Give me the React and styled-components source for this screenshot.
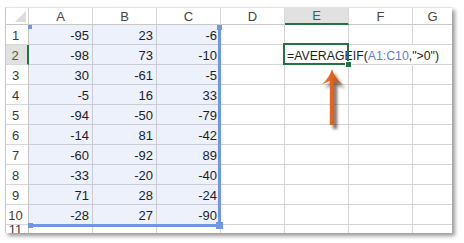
import styled, { createGlobalStyle } from "styled-components";

const GlobalStyle = createGlobalStyle`
  html, body { margin: 0; padding: 0; background: #fff; }
  body { font-family: "Liberation Sans", Arial, sans-serif; }
`;

const data = [
  [-95, 23, -6],
  [-98, 73, -10],
  [30, -61, -5],
  [-5, 16, 33],
  [-94, -50, -79],
  [-14, 81, -42],
  [-60, -92, 89],
  [-33, -20, -40],
  [71, 28, -24],
  [-28, 27, -90],
];

const cols = ["A", "B", "C", "D", "E", "F", "G"];

const Page = styled.div`
  width: 464px;
  height: 243px;
  padding: 7px 0 0 5px;
  box-sizing: border-box;
`;

const Frame = styled.div`
  position: relative;
  width: 447px;
  height: 226px;
  border-left: 1px solid #c9c9c9;
  border-top: 1px solid #e4e4e4;
  box-sizing: border-box;
  overflow: hidden;
  box-shadow: 3px 3px 4px rgba(0, 0, 0, 0.4);
  background: #fff;
`;

const Grid = styled.div`
  display: grid;
  grid-template-columns: 23px repeat(6, 64px) 40px;
  grid-template-rows: 17px repeat(10, 20px) 10px;
`;

const Corner = styled.div`
  position: relative;
  background: #fff;
  border-right: 1px solid #d4d4d4;
  border-bottom: 1px solid #c6c6c6;
  &::after {
    content: "";
    position: absolute;
    right: 2px;
    bottom: 2px;
    border-left: 11px solid transparent;
    border-bottom: 11px solid #dcdcdc;
  }
`;

const ColHead = styled.div`
  display: flex;
  align-items: center;
  justify-content: center;
  font-size: 13px;
  color: ${(p) => (p.$active ? "#217346" : "#444")};
  background: ${(p) => (p.$active ? "#e1e1e1" : "#fff")};
  border-right: 1px solid #d8d8d8;
  border-bottom: ${(p) => (p.$active ? "2px solid #217346" : "1px solid #c6c6c6")};
  box-sizing: border-box;
`;

const RowHead = styled.div`
  display: flex;
  align-items: ${(p) => (p.$clip ? "flex-start" : "center")};
  justify-content: center;
  padding: ${(p) => (p.$clip ? "0 3px 0 0" : "2px 3px 0 0")};
  font-size: 13px;
  line-height: ${(p) => (p.$clip ? "9px" : "normal")};
  overflow: hidden;
  color: ${(p) => (p.$active ? "#217346" : "#3a3a3a")};
  background: ${(p) => (p.$active ? "#e1e1e1" : "#fff")};
  border-right: ${(p) => (p.$active ? "2px solid #217346" : "1px solid #c6c6c6")};
  border-bottom: 1px solid #d8d8d8;
  box-sizing: border-box;
`;

const Cell = styled.div`
  display: flex;
  align-items: center;
  justify-content: flex-end;
  padding: 2px 3px 0 0;
  font-size: 13px;
  color: #1e1e1e;
  background: ${(p) => (p.$sel ? "#edf1fb" : "#fff")};
  border-right: 1px solid ${(p) => (p.$sel ? "#c9ccd4" : p.$hideRight ? "transparent" : "#d4d4d4")};
  border-bottom: 1px solid ${(p) => (p.$sel ? "#c9ccd4" : "#d4d4d4")};
  box-sizing: border-box;
  white-space: nowrap;
  overflow: visible;
`;

const FormulaCell = styled(Cell)`
  position: relative;
  justify-content: flex-start;
  padding: 2px 0 0 2px;
  font-size: 12.3px;
  z-index: 3;
  &::before {
    content: "";
    position: absolute;
    left: -2px;
    top: -2px;
    right: -1px;
    bottom: -1px;
    border: 2px solid #217346;
    pointer-events: none;
  }
  &::after {
    content: "";
    position: absolute;
    right: -4px;
    bottom: -4px;
    width: 5px;
    height: 5px;
    background: #217346;
    border: 1px solid #fff;
  }
`;

const Ref = styled.span`
  color: ${(p) => p.$color || "inherit"};
`;

const Caret = styled.span`
  display: inline-block;
  width: 1px;
  height: 15px;
  margin-left: 2px;
  background: #000;
`;

const RangeBox = styled.div`
  position: absolute;
  left: 22px;
  top: 17px;
  width: 193px;
  height: 202px;
  border-right: 3px solid #6f97e6;
  border-bottom: 3px solid #6f97e6;
  box-sizing: border-box;
  pointer-events: none;
  z-index: 2;
`;

const Handle = styled.span`
  position: absolute;
  width: ${(p) => p.$size}px;
  height: ${(p) => p.$size}px;
  background: #6f97e6;
  ${(p) => p.$pos}
`;

const ArrowLayer = styled.svg`
  position: absolute;
  left: 312px;
  top: 56px;
  z-index: 4;
`;

const arrowPath =
  "M14 5 C15.5 10 19 16 24.5 20.5 L16.2 17 L16.2 61 L11.8 61 L11.8 17 L3.5 20.5 C9 16 12.5 10 14 5 Z";

export default function App() {
  return (
    <>
      <GlobalStyle />
      <Page>
        <Frame>
          <Grid>
            <Corner />
            {cols.map((c) => (
              <ColHead key={c} $active={c === "E"}>
                {c}
              </ColHead>
            ))}
            {data.map((row, r) => (
              <Row key={r} r={r} row={row} />
            ))}
            <RowHead $clip>11</RowHead>
            {cols.map((c) => (
              <Cell key={c} />
            ))}
          </Grid>
          <RangeBox>
            <Handle $size={4} $pos="left: 0; top: 0;" />
            <Handle $size={5} $pos="right: -4px; top: 0;" />
            <Handle $size={5} $pos="left: 0; bottom: -4px;" />
            <Handle $size={7} $pos="right: -5px; bottom: -5px;" />
          </RangeBox>
          <ArrowLayer width="40" height="72" viewBox="0 0 40 72">
            <defs>
              <filter id="sh" x="-50%" y="-50%" width="200%" height="200%">
                <feGaussianBlur stdDeviation="1.5" />
              </filter>
              <linearGradient id="og" x1="0" x2="1" y1="0" y2="0">
                <stop offset="0" stopColor="#f27c30" />
                <stop offset="0.5" stopColor="#e2611c" />
                <stop offset="1" stopColor="#c64d0f" />
              </linearGradient>
            </defs>
            <path d={arrowPath} fill="#000" opacity="0.55" transform="translate(3 4)" filter="url(#sh)" />
            <path d={arrowPath} fill="url(#og)" />
          </ArrowLayer>
        </Frame>
      </Page>
    </>
  );
}

function Row({ r, row }) {
  const active = r === 1;
  return (
    <>
      <RowHead $active={active}>{r + 1}</RowHead>
      {row.map((v, i) => (
        <Cell key={i} $sel>
          {v}
        </Cell>
      ))}
      <Cell />
      {active ? (
        <FormulaCell>
          =AVERAGEIF(<Ref $color="#5b7fe0">A1:C10</Ref>,"&gt;0")
          <Caret />
        </FormulaCell>
      ) : (
        <Cell />
      )}
      <Cell $hideRight={active} />
      <Cell />
    </>
  );
}
